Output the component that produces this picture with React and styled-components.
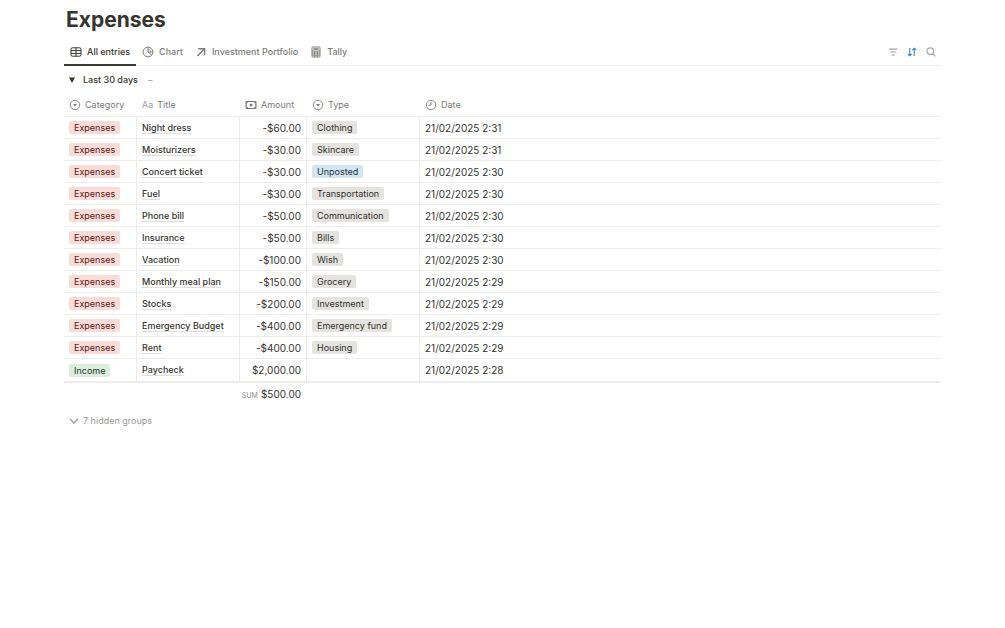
import React, { useState } from 'react'
import styled, { createGlobalStyle } from 'styled-components'

const entries = [
  { category: 'Expenses', title: 'Night dress', amount: '-$60.00', type: 'Clothing', date: '21/02/2025 2:31' },
  { category: 'Expenses', title: 'Moisturizers', amount: '-$30.00', type: 'Skincare', date: '21/02/2025 2:31' },
  { category: 'Expenses', title: 'Concert ticket', amount: '-$30.00', type: 'Unposted', date: '21/02/2025 2:30' },
  { category: 'Expenses', title: 'Fuel', amount: '-$30.00', type: 'Transportation', date: '21/02/2025 2:30' },
  { category: 'Expenses', title: 'Phone bill', amount: '-$50.00', type: 'Communication', date: '21/02/2025 2:30' },
  { category: 'Expenses', title: 'Insurance', amount: '-$50.00', type: 'Bills', date: '21/02/2025 2:30' },
  { category: 'Expenses', title: 'Vacation', amount: '-$100.00', type: 'Wish', date: '21/02/2025 2:30' },
  { category: 'Expenses', title: 'Monthly meal plan', amount: '-$150.00', type: 'Grocery', date: '21/02/2025 2:29' },
  { category: 'Expenses', title: 'Stocks', amount: '-$200.00', type: 'Investment', date: '21/02/2025 2:29' },
  { category: 'Expenses', title: 'Emergency Budget', amount: '-$400.00', type: 'Emergency fund', date: '21/02/2025 2:29' },
  { category: 'Expenses', title: 'Rent', amount: '-$400.00', type: 'Housing', date: '21/02/2025 2:29' },
  { category: 'Income', title: 'Paycheck', amount: '$2,000.00', type: '', date: '21/02/2025 2:28' },
]

const tagColors = {
  red: { bg: '#f9dcd8', text: '#5d1715' },
  green: { bg: '#dbeddb', text: '#1c3829' },
  blue: { bg: '#d3e5ef', text: '#183347' },
  gray: { bg: '#e4e3df', text: '#32302c' },
}

const TableIcon = () => (
  <Icon viewBox="0 0 12 12">
    <rect x="1" y="1.8" width="10" height="8.4" rx="1.4" />
    <path d="M1 4.6h10M1 7.4h10M6 1.8v8.4" />
  </Icon>
)

const ChartIcon = () => (
  <Icon viewBox="0 0 12 12">
    <circle cx="6" cy="6" r="4.9" />
    <path d="M6 1.1V6l3.8 3.1M6 6h4.9" />
    <path d="M6 3.2A2.8 2.8 0 0 1 8.8 6" strokeWidth="0.6" />
  </Icon>
)

const ArrowIcon = () => (
  <Icon viewBox="0 0 12 12" $weight={1.4}>
    <path d="M2.4 9.9 9.4 2.8M3.2 2.7h6.4v6.6" />
  </Icon>
)

const CalculatorIcon = () => (
  <Icon viewBox="0 0 12 12">
    <rect x="2" y="1" width="8" height="10" rx="0.8" />
    <path d="M3.4 3h5.2" strokeWidth="1.6" />
    <path d="M2 5.1h8M2 7.1h8M2 9.1h8M4.6 5v6M7.3 5v6" />
  </Icon>
)

const SelectIcon = () => (
  <Icon viewBox="0 0 12 12" $weight={0.9}>
    <circle cx="6" cy="6" r="4.7" />
    <path d="M4.1 4.9h3.8L6 7.8z" fill="currentColor" stroke="none" />
  </Icon>
)

const MoneyIcon = () => (
  <Icon viewBox="0 0 12 12">
    <rect x="1.1" y="2.5" width="9.8" height="7" rx="0.6" strokeWidth="1.2" />
    <circle cx="6" cy="6" r="1.5" fill="currentColor" stroke="none" />
    <path d="M1.4 4.2c.9 0 1.4-.5 1.4-1.4M9.2 2.8c0 .9.5 1.4 1.4 1.4M1.4 7.8c.9 0 1.4.5 1.4 1.4M9.2 9.2c0-.9.5-1.4 1.4-1.4" strokeWidth="0.9" />
  </Icon>
)

const ClockIcon = () => (
  <Icon viewBox="0 0 12 12" $weight={0.9}>
    <circle cx="6" cy="6" r="4.7" />
    <path d="M6 3v3.2H3.4" />
  </Icon>
)

const FilterIcon = () => (
  <Icon viewBox="0 0 12 12" $weight={1.2}>
    <path d="M1.8 3.2h8.6M3.1 6h6M4.6 8.8h3" />
  </Icon>
)

const SortIcon = () => (
  <Icon viewBox="0 0 12 12" $weight={1.1}>
    <path d="M3.8 2v7.6M1.8 7.8l2 2 2-2M8.2 10V2.4M6.2 4.2l2-2 2 2" />
  </Icon>
)

const SearchIcon = () => (
  <Icon viewBox="0 0 12 12" $weight={1.2}>
    <circle cx="5.2" cy="5.2" r="3.3" />
    <path d="m7.6 7.6 2.8 2.8" />
  </Icon>
)

const tabs = [
  { name: 'All entries', icon: <TableIcon /> },
  { name: 'Chart', icon: <ChartIcon /> },
  { name: 'Investment Portfolio', icon: <ArrowIcon /> },
  { name: 'Tally', icon: <CalculatorIcon /> },
]

function categoryColor(category) {
  return category === 'Income' ? 'green' : 'red'
}

function typeColor(type) {
  return type === 'Unposted' ? 'blue' : 'gray'
}

export default function App() {
  const [active, setActive] = useState('All entries')
  const [open, setOpen] = useState(true)

  return (
    <>
      <GlobalStyle />
      <Page>
        <Heading>Expenses</Heading>
        <ViewBar>
          <Tabs>
            {tabs.map((tab) => (
              <Tab key={tab.name} $active={tab.name === active} onClick={() => setActive(tab.name)}>
                {tab.icon}
                {tab.name}
              </Tab>
            ))}
          </Tabs>
          <Tools>
            <ToolButton aria-label="Filter"><FilterIcon /></ToolButton>
            <ToolButton aria-label="Sort" $on><SortIcon /></ToolButton>
            <ToolButton aria-label="Search"><SearchIcon /></ToolButton>
          </Tools>
        </ViewBar>

        <GroupHeader>
          <GroupToggle aria-expanded={open} onClick={() => setOpen(!open)}>
            <Triangle viewBox="0 0 8 8" $open={open}>
              <path d="M1 1.4h6L4 7z" />
            </Triangle>
            Last 30 days
          </GroupToggle>
          <Dash>–</Dash>
        </GroupHeader>

        {open && (
          <Table>
            <colgroup>
              <Col $width={72} />
              <Col $width={103} />
              <Col $width={67} />
              <Col $width={113} />
              <Col />
            </colgroup>
            <thead>
              <tr>
                <HeadCell><HeadLabel><SelectIcon />Category</HeadLabel></HeadCell>
                <HeadCell><HeadLabel><Aa>Aa</Aa>Title</HeadLabel></HeadCell>
                <HeadCell><HeadLabel><MoneyIcon />Amount</HeadLabel></HeadCell>
                <HeadCell><HeadLabel><SelectIcon />Type</HeadLabel></HeadCell>
                <HeadCell><HeadLabel><ClockIcon />Date</HeadLabel></HeadCell>
              </tr>
            </thead>
            <tbody>
              {entries.map((entry) => (
                <tr key={entry.title}>
                  <Cell><Tag $color={categoryColor(entry.category)}>{entry.category}</Tag></Cell>
                  <Cell><TitleLink href="#">{entry.title}</TitleLink></Cell>
                  <NumberCell $right>{entry.amount}</NumberCell>
                  <Cell>{entry.type && <Tag $color={typeColor(entry.type)}>{entry.type}</Tag>}</Cell>
                  <NumberCell>{entry.date}</NumberCell>
                </tr>
              ))}
            </tbody>
            <tfoot>
              <tr>
                <FootCell colSpan={3}><SumLabel>SUM</SumLabel>$500.00</FootCell>
                <FootCell colSpan={2} />
              </tr>
            </tfoot>
          </Table>
        )}

        <HiddenGroups>
          <Icon viewBox="0 0 12 12" $weight={1.3}>
            <path d="m2 4 4 4 4-4" />
          </Icon>
          7 hidden groups
        </HiddenGroups>
      </Page>
    </>
  )
}

const GlobalStyle = createGlobalStyle`
  * {
    box-sizing: border-box;
  }

  body {
    margin: 0;
    background: #fff;
    color: #37352f;
    font-family: Inter, "Liberation Sans", sans-serif;
    font-size: 9px;
    line-height: 14px;
  }

  button {
    font: inherit;
    color: inherit;
    background: none;
    border: none;
    padding: 0;
    cursor: pointer;
  }
`

const Page = styled.main`
  padding: 6px 64px 40px;
`

const Heading = styled.h1`
  margin: 0;
  padding-left: 2px;
  font-size: 21px;
  line-height: 28px;
  font-weight: 700;
`

const Icon = styled.svg`
  width: 12px;
  height: 12px;
  flex: none;
  fill: none;
  stroke: currentColor;
  stroke-width: ${(props) => props.$weight || 1};
`

const ViewBar = styled.div`
  display: flex;
  justify-content: space-between;
  align-items: center;
  margin-top: 4px;
  border-bottom: 1px solid #ededec;
`

const Tabs = styled.nav`
  display: flex;
  margin-bottom: -1px;
`

const Tab = styled.button`
  && {
    display: flex;
    align-items: center;
    gap: 5px;
    height: 28px;
    padding: 2px 6px 0;
    font-weight: 500;
    white-space: nowrap;
    color: ${(props) => (props.$active ? '#37352f' : '#7d7c78')};
    border-bottom: 2px solid ${(props) => (props.$active ? '#37352f' : 'transparent')};
  }
`

const Tools = styled.div`
  display: flex;
  gap: 7px;
  padding-right: 4px;
`

const ToolButton = styled.button`
  && {
    display: flex;
    color: ${(props) => (props.$on ? '#3a84cc' : '#a5a4a0')};
  }
`

const GroupHeader = styled.div`
  display: flex;
  align-items: center;
  gap: 10px;
  height: 28px;
  padding-left: 4px;
`

const GroupToggle = styled.button`
  && {
    display: flex;
    align-items: center;
    gap: 7px;
    font-weight: 500;
  }
`

const Triangle = styled.svg`
  width: 8px;
  height: 8px;
  fill: #37352f;
  transform: rotate(${(props) => (props.$open ? 0 : -90)}deg);
`

const Dash = styled.span`
  color: #9b9a97;
`

const Table = styled.table`
  width: 100%;
  table-layout: fixed;
  border-collapse: separate;
  border-spacing: 0;
`

const Col = styled.col`
  width: ${(props) => (props.$width ? `${props.$width}px` : 'auto')};
`

const HeadCell = styled.th`
  height: 23px;
  padding: 0 5px;
  text-align: left;
  font-weight: 400;
  color: #7d7c78;
  border-bottom: 1px solid #ededeb;

  & + & {
    padding-left: 6px;
  }
`

const HeadLabel = styled.span`
  display: flex;
  align-items: center;
  gap: 4px;
`

const Aa = styled.span`
  color: #9b9a97;
`

const Cell = styled.td`
  height: 22px;
  padding: 0 5px;
  vertical-align: middle;
  white-space: nowrap;
  border-bottom: 1px solid #ededeb;

  & + & {
    border-left: 1px solid #ededeb;
  }

  tr:last-child > & {
    height: 24px;
    border-bottom-width: 2px;
  }
`

const NumberCell = styled(Cell)`
  font-size: 10px;
  text-align: ${(props) => (props.$right ? 'right' : 'left')};
`

const Tag = styled.span`
  display: block;
  width: fit-content;
  padding: 0 5px;
  border-radius: 2px;
  line-height: 13px;
  background: ${(props) => tagColors[props.$color].bg};
  color: ${(props) => tagColors[props.$color].text};
`

const TitleLink = styled.a`
  color: inherit;
  font-weight: 500;
  text-decoration: none;
  border-bottom: 1px solid #dededc;
`

const FootCell = styled.td`
  height: 24px;
  padding: 0 5px;
  font-size: 10px;
  text-align: right;
`

const SumLabel = styled.span`
  margin-right: 3px;
  font-size: 7px;
  color: #8f8e8a;
`

const HiddenGroups = styled.button`
  && {
    display: flex;
    align-items: center;
    gap: 3px;
    margin: 7px 0 0 4px;
    color: #9b9a97;
  }
`
